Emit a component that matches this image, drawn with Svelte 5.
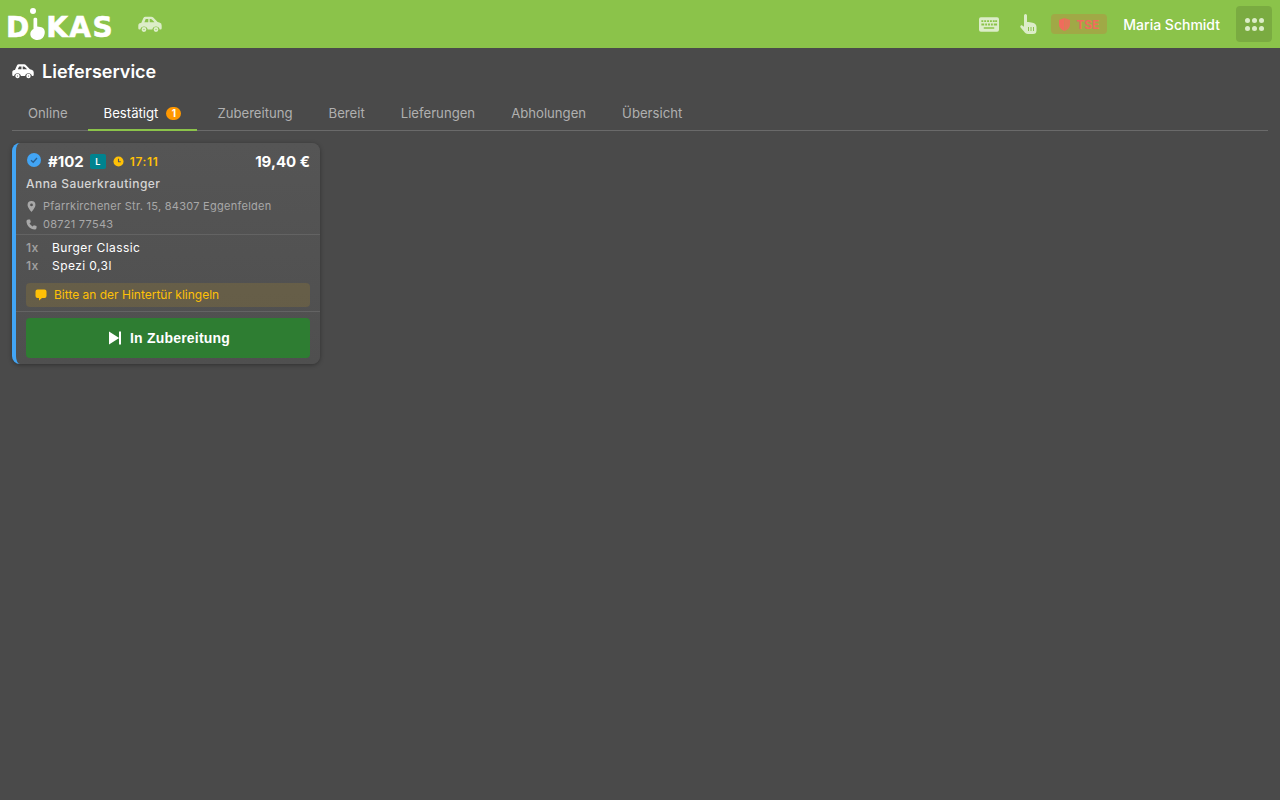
<script>
	const tabs = [
		{ label: 'Online' },
		{ label: 'Bestätigt', count: 1, active: true },
		{ label: 'Zubereitung' },
		{ label: 'Bereit' },
		{ label: 'Lieferungen' },
		{ label: 'Abholungen' },
		{ label: 'Übersicht' }
	];

	const items = [
		{ qty: '1x', name: 'Burger Classic' },
		{ qty: '1x', name: 'Spezi 0,3l' }
	];

	// side view car, shared by the nav and the page title
	const car =
		'M3.2 7 L5.4 2 A2.2 2.2 0 0 1 7.400 0.700 H13.300 A2.800 2.800 0 0 1 15.300 1.600 L19.600 6 L21.400 6.600 A3 3 0 0 1 23.700 9.700 V12.300 A1.200 1.200 0 0 1 22.500 13.500 H21.700 A3.800 3.800 0 0 0 14.300 13.500 H9.700 A3.800 3.800 0 0 0 2.300 13.500 H1.500 A1.200 1.200 0 0 1 0.300 12.300 V9.500 A2.400 2.400 0 0 1 3.200 7 Z M7.700 3 L6.400 6.200 H10.300 V3 Z M11.700 3 V6.200 H16.500 L13.900 3.500 A1.600 1.600 0 0 0 12.800 3 Z';
</script>

{#snippet carIcon()}
	<path d={car} fill="currentColor" fill-rule="evenodd" />
	<circle cx="6" cy="13.500" r="1.500" fill="none" stroke="currentColor" stroke-width="1.800" />
	<circle cx="18" cy="13.500" r="1.500" fill="none" stroke="currentColor" stroke-width="1.800" />
{/snippet}

<div class="page">
	<header class="topbar">
		<div class="logo">
			<span>D</span>
			<svg class="logo-hand" viewBox="0 0 15 32" aria-hidden="true">
				<circle cx="3" cy="3" r="3" fill="#fff" />
				<path d="M3.500 11 C3.500 9.200 7.200 9.200 7.200 11 V18.500 C11.500 18.800 14.800 20 14.800 24 C14.800 29 11.500 32 7.500 32 C3.500 32 0.300 29.500 0.300 26 C0.300 23.500 1.800 22 3.500 21 Z" fill="#fff" />
			</svg>
			<span class="kas">KAS</span>
		</div>
		<svg class="nav-car" viewBox="0 0 24 16" aria-hidden="true">
			{@render carIcon()}
		</svg>
		<div class="spacer"></div>
		<svg class="kbd" viewBox="0 0 21 15" aria-hidden="true">
			<path fill="currentColor" fill-rule="evenodd" d="M2 0 H19 A2 2 0 0 1 21 2 V13 A2 2 0 0 1 19 15 H2 A2 2 0 0 1 0 13 V2 A2 2 0 0 1 2 0 Z M2.500 3 V5 H4.500 V3 Z M5.500 3 V5 H7.500 V3 Z M8.500 3 V5 H10.500 V3 Z M11.500 3 V5 H13.500 V3 Z M14.500 3 V5 H16.500 V3 Z M17 3 V5 H19 V3 Z M2.500 6.500 V8.500 H5.500 V6.500 Z M6.500 6.500 V8.500 H8.500 V6.500 Z M9.500 6.500 V8.500 H11.500 V6.500 Z M12.500 6.500 V8.500 H14.500 V6.500 Z M15.500 6.500 V8.500 H19 V6.500 Z M5 10.500 V12 H16 V10.500 Z" />
		</svg>
		<svg class="hand" viewBox="0 0 17 20" aria-hidden="true">
			<path fill="currentColor" fill-rule="evenodd" d="M4 1.500 A1.500 1.500 0 0 1 7 1.500 V8 C9 8 11 8.300 12.500 8.700 C15 9.300 16.500 10.500 16.500 13 V16.500 A3.500 3.500 0 0 1 13 20 H8 C6 20 5 19 4 17.500 L0.600 13.500 C-0.200 12.500 0.800 10.800 2.200 11.500 L4 12.800 Z M8 13 V17 H9 V13 Z M10.500 13 V17 H11.500 V13 Z M13 13 V17 H14 V13 Z" />
		</svg>
		<div class="tse">
			<svg viewBox="0 0 12 14" aria-hidden="true">
				<path fill="currentColor" opacity="0.85" d="M6 0 L12 2.200 V7 C12 10.500 9.500 13 6 14 Z" />
				<path fill="currentColor" d="M6 0 L0 2.200 V7 C0 10.500 2.500 13 6 14 Z" />
			</svg>
			<span>TSE</span>
		</div>
		<span class="user">Maria Schmidt</span>
		<button class="apps" aria-label="Apps">
			{#each Array(6) as _}
				<i></i>
			{/each}
		</button>
	</header>

	<main class="content">
		<h1>
			<svg viewBox="0 0 24 16" aria-hidden="true">
				{@render carIcon()}
			</svg>
			Lieferservice
		</h1>

		<nav class="tabs">
			{#each tabs as tab}
				<div class="tab" class:active={tab.active}>
					{tab.label}
					{#if tab.count}
						<span class="count">{tab.count}</span>
					{/if}
				</div>
			{/each}
		</nav>

		<article class="card">
			<section class="head">
				<div class="title-row">
					<svg class="check" viewBox="0 0 14 14" aria-hidden="true">
						<circle cx="7" cy="7" r="7" fill="#42a5f5" />
						<path d="M4 7.200 L6.200 9.300 L10 5" fill="none" stroke="#2a5f8f" stroke-width="1.300" />
					</svg>
					<span class="number">#102</span>
					<span class="type">L</span>
					<svg class="clock" viewBox="0 0 12 12" aria-hidden="true">
						<circle cx="6" cy="6" r="5.500" fill="#ffc107" />
						<path d="M6 3 V6.300 H8.500" fill="none" stroke="#555" stroke-width="1.200" />
					</svg>
					<span class="time">17:11</span>
					<span class="price">19,40 €</span>
				</div>
				<div class="customer">Anna Sauerkrautinger</div>
				<div class="info">
					<svg viewBox="0 0 10 12" aria-hidden="true">
						<path fill="currentColor" fill-rule="evenodd" d="M5 0 A4.300 4.300 0 0 1 9.300 4.300 C9.300 7 5 12 5 12 C5 12 0.700 7 0.700 4.300 A4.300 4.300 0 0 1 5 0 Z M5 2.800 A1.500 1.500 0 1 0 5 5.800 A1.500 1.500 0 1 0 5 2.800 Z" />
					</svg>
					Pfarrkirchener Str. 15, 84307 Eggenfelden
				</div>
				<div class="info">
					<svg viewBox="0 0 12 12" aria-hidden="true">
						<path fill="currentColor" d="M2.500 0.500 L4.500 0.500 L5.300 3.500 L3.900 4.700 C4.500 6 5.800 7.400 7.300 8.100 L8.500 6.700 L11.500 7.500 V9.500 C11.500 10.800 10.500 11.500 9.500 11.500 C4.500 11.200 0.800 7.500 0.500 2.500 C0.500 1.500 1.300 0.500 2.500 0.500 Z" />
					</svg>
					08721 77543
				</div>
			</section>

			<section class="items">
				{#each items as item}
					<div class="item">
						<span class="qty">{item.qty}</span>
						<span>{item.name}</span>
					</div>
				{/each}
				<div class="note">
					<svg viewBox="0 0 12 12" aria-hidden="true">
						<path fill="currentColor" d="M2.500 0.500 H9.500 A2 2 0 0 1 11.500 2.500 V7 A2 2 0 0 1 9.500 9 H7 L4 11.500 V9 H2.500 A2 2 0 0 1 0.500 7 V2.500 A2 2 0 0 1 2.500 0.500 Z" />
					</svg>
					<span>Bitte an der Hintertür klingeln</span>
				</div>
			</section>

			<section class="actions">
				<button class="advance">
					<svg viewBox="0 0 12 14" aria-hidden="true">
						<path fill="currentColor" d="M0 0.500 L10.200 7 L0 13.500 Z M10 0.500 H12 V13.500 H10 Z" />
					</svg>
					In Zubereitung
				</button>
			</section>
		</article>
	</main>
</div>

<style>
	:global(body) {
		background: #4a4a4a;
		font-family: Inter, 'Noto Sans', sans-serif;
	}

	.page {
		min-height: 100vh;
		background: #4a4a4a;
	}

	.topbar {
		height: 48px;
		display: flex;
		align-items: center;
		padding: 0 8px;
		background: #8bc34a;
		color: #fff;
	}

	.logo {
		display: flex;
		align-items: flex-end;
		height: 32px;
		margin-left: -2px;
		font-family: 'DejaVu Sans', sans-serif;
		font-size: 28px;
		line-height: 24px;
		font-weight: 700;
		color: #fff;
		-webkit-text-stroke: 0.6px #fff;
	}

	.kas {
		letter-spacing: 1.4px;
	}

	.logo-hand {
		width: 15px;
		height: 32px;
		margin: 0 1px 0 1px;
		flex: none;
	}

	.nav-car {
		width: 24px;
		height: 16px;
		margin-left: 24px;
		color: #dcedc8;
	}

	.spacer {
		flex: 1;
	}

	.kbd {
		width: 20px;
		height: 15px;
		color: #dcedc8;
	}

	.hand {
		width: 17px;
		height: 20px;
		margin-left: 21px;
		color: #dcedc8;
	}

	.tse {
		display: flex;
		align-items: center;
		justify-content: center;
		gap: 6px;
		width: 56px;
		height: 20px;
		margin-left: 14px;
		border-radius: 4px;
		background: rgba(244, 67, 54, 0.2);
		color: #ef6c5c;
		font-size: 12px;
		font-weight: 700;
	}

	.tse svg {
		width: 11px;
		height: 13px;
	}

	.user {
		margin-left: 16px;
		font-size: 14px;
		font-weight: 500;
	}

	.apps {
		display: grid;
		grid-template-columns: repeat(3, 5px);
		gap: 3px 2px;
		align-content: center;
		justify-content: center;
		width: 36px;
		height: 36px;
		margin-left: 16px;
		padding: 0;
		border: 0;
		border-radius: 4px;
		background: rgba(0, 0, 0, 0.12);
	}

	.apps i {
		width: 5px;
		height: 5px;
		border-radius: 50%;
		background: #dcedc8;
	}

	.content {
		padding: 11px 12px 12px;
	}

	h1 {
		display: flex;
		align-items: center;
		gap: 8px;
		height: 24px;
		margin: 0 0 14px;
		font-size: 18px;
		font-weight: 600;
		color: #fff;
	}

	h1 svg {
		width: 22px;
		height: 16px;
	}

	.tabs {
		display: flex;
		border-bottom: 1px solid #6a6a6a;
	}

	.tab {
		display: flex;
		align-items: center;
		gap: 8px;
		height: 34px;
		padding: 0 16px;
		margin-bottom: -1px;
		margin-right: 4px;
		border-bottom: 2px solid transparent;
		font-size: 13.15px;
		color: #b0b0b0;
		box-sizing: border-box;
	}

	.tab.active {
		border-bottom-color: #8bc34a;
		color: #fff;
	}

	.count {
		display: flex;
		align-items: center;
		justify-content: center;
		width: 15px;
		height: 13px;
		border-radius: 7px;
		background: #ff9800;
		color: #fff;
		font-size: 10px;
		font-weight: 700;
	}

	.card {
		width: 308px;
		margin-top: 12px;
		box-sizing: border-box;
		border-left: 4px solid #42a5f5;
		border-radius: 8px;
		background: linear-gradient(#555555, #4f4f4f);
		box-shadow: 0 1px 4px rgba(0, 0, 0, 0.35);
		overflow: hidden;
	}

	.head {
		padding: 8px 10px 0 10px;
		border-bottom: 1px solid #636363;
		height: 92px;
		box-sizing: border-box;
	}

	.title-row {
		display: flex;
		align-items: center;
		height: 20px;
	}

	.check {
		width: 14px;
		height: 14px;
		margin: -2px 0 0 1px;
	}

	.number {
		margin-left: 7px;
		font-size: 15px;
		font-weight: 700;
		color: #fff;
	}

	.type {
		display: flex;
		align-items: center;
		justify-content: center;
		width: 16px;
		height: 15px;
		margin-left: 6px;
		border-radius: 2px;
		background: #00838f;
		color: #fff;
		font-size: 9px;
		font-weight: 600;
	}

	.clock {
		width: 11px;
		height: 11px;
		margin-left: 7px;
	}

	.time {
		margin-left: 6px;
		font-size: 12px;
		font-weight: 600;
		letter-spacing: 0.6px;
		color: #ffc107;
	}

	.price {
		margin-left: auto;
		font-size: 15px;
		font-weight: 700;
		color: #fff;
	}

	.customer {
		margin-top: 4px;
		font-size: 12px;
		line-height: 18px;
		font-weight: 500;
		letter-spacing: 0.45px;
		color: #d4d4d4;
	}

	.info {
		display: flex;
		align-items: center;
		gap: 6px;
		height: 18px;
		font-size: 11px;
		letter-spacing: 0.27px;
		color: #a8a8a8;
	}

	.customer + .info {
		margin-top: 4px;
	}

	.info svg {
		width: 11px;
		height: 11px;
	}

	.items {
		padding: 3px 10px 0;
		height: 77px;
		box-sizing: border-box;
		border-bottom: 1px solid #636363;
	}

	.item {
		display: flex;
		height: 18px;
		align-items: center;
		font-size: 12px;
		letter-spacing: 0.43px;
		color: #fff;
	}

	.qty {
		width: 26px;
		font-weight: 600;
		color: #9e9e9e;
	}

	.note {
		display: flex;
		align-items: center;
		gap: 7px;
		height: 24px;
		margin-top: 9px;
		padding-left: 9px;
		border-radius: 4px;
		background: rgba(255, 193, 7, 0.12);
		color: #ffc107;
		font-size: 12px;
	}

	.note span {
		margin-bottom: 1px;
	}

	.note svg {
		width: 12px;
		height: 12px;
	}

	.actions {
		padding: 6px 10px;
	}

	.advance {
		display: flex;
		align-items: center;
		justify-content: center;
		gap: 9px;
		width: 100%;
		height: 40px;
		padding: 0 0 0 3px;
		border: 0;
		border-radius: 4px;
		background: #2e7d32;
		color: #fff;
		font-family: 'Liberation Sans', Arial, sans-serif;
		font-size: 14px;
		font-weight: 700;
		letter-spacing: 0.2px;
	}

	.advance svg {
		width: 12px;
		height: 14px;
	}
</style>
